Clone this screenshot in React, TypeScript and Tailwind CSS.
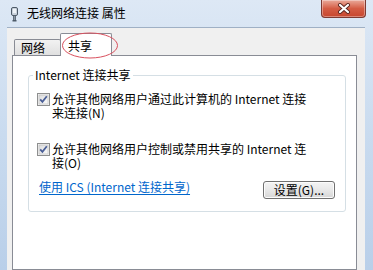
export default function App() {
  return (
    <div className="relative w-[373px] h-[270px] overflow-hidden flex flex-col bg-gradient-to-b from-[#dde8f5] via-[#c9dbef] to-[#b9cfe9] font-['Noto_Sans_CJK_SC',sans-serif] text-[12px] leading-[14px] text-black">
      {/* Title bar */}
      <div className="h-[27px] shrink-0 flex items-start pl-[10px] pr-[7px]">
        <svg width="9" height="15" viewBox="0 0 9 15" className="mt-[7px]">
          <rect x="1.5" y="0.5" width="6" height="8" rx="1.5" fill="#c9d2dc" stroke="#4d5a68" />
          <rect x="3" y="2" width="3" height="4" fill="#eef3f8" />
          <rect x="3.5" y="8.5" width="2" height="5" fill="#8a96a3" stroke="#4d5a68" strokeWidth="0.8" />
          <rect x="2.5" y="13" width="4" height="1.5" fill="#4d5a68" />
        </svg>
        <span className="ml-[8px] mt-[6px] whitespace-nowrap">无线网络连接 属性</span>
        <button className="ml-auto w-[45px] h-[18px] flex items-center justify-center rounded-b-[4px] border border-t-0 border-[#7d3a32] bg-gradient-to-b from-[#e9a99a] via-[#d45c44] to-[#c7462e] shadow-[inset_0_0_0_1px_rgba(255,255,255,0.35)]">
          <svg width="14" height="11" viewBox="0 0 14 11">
            <path d="M3 2 L11 9 M11 2 L3 9" stroke="#5a2620" strokeWidth="4" strokeLinecap="round" />
            <path d="M3 2 L11 9 M11 2 L3 9" stroke="#ffffff" strokeWidth="2.2" strokeLinecap="round" />
          </svg>
        </button>
      </div>

      {/* Window body */}
      <div className="flex-1 flex pl-[7px] pr-[8px]">
        <div className="flex-1 flex flex-col bg-[#f0f0f0] border-t border-[#9fb0c5] pl-[5px] pr-[8px] pt-[5px]">
          {/* Tabs */}
          <div className="h-[22px] flex items-end">
            <div className="ml-[2px] w-[47px] h-[16px] pl-[6px] pt-[1px] border border-b-0 border-[#898c95] rounded-t-[2px] bg-gradient-to-b from-[#f2f2f2] to-[#e0e0e0] whitespace-nowrap">
              网络
            </div>
            <div className="relative z-10 -ml-px -mb-px w-[52px] h-[23px] pl-[7px] pt-[5px] border border-b-0 border-[#898c95] rounded-t-[2px] bg-white whitespace-nowrap">
              共享
            </div>
          </div>

          {/* Tab panel */}
          <div className="flex-1 bg-white border border-[#898c95] pl-[15px] pt-[12px]">
            <fieldset className="w-[318px] border border-[#d5dfe5] rounded-[3px] px-[8px] pt-[10px] pb-[12px]">
              <legend className="-ml-[4px] px-[2px] whitespace-nowrap">Internet 连接共享</legend>

              <div className="flex items-start">
                <Check />
                <span className="ml-[2px] whitespace-nowrap">
                  允许其他网络用户通过此计算机的 Internet 连接
                  <br />
                  来连接(N)
                </span>
              </div>

              <div className="flex items-start mt-[22px]">
                <Check />
                <span className="ml-[2px] whitespace-nowrap">
                  允许其他网络用户控制或禁用共享的 Internet 连
                  <br />
                  接(O)
                </span>
              </div>

              <div className="flex items-start justify-between mt-[10px]">
                <a className="pl-[2px] text-[#0066cc] underline underline-offset-2 whitespace-nowrap cursor-pointer">
                  使用 ICS (Internet 连接共享)
                </a>
                <button className="mt-[1px] mr-[2px] w-[72px] h-[18px] flex items-center justify-center rounded-[3px] border border-[#707070] bg-gradient-to-b from-[#f4f4f4] via-[#e8e8e8] to-[#d6d6d6] shadow-[inset_0_0_0_1px_#fcfcfc] text-[12px] leading-[14px] whitespace-nowrap">
                  设置(G)...
                </button>
              </div>
            </fieldset>
          </div>
        </div>
      </div>

      {/* Red annotation ellipse around the selected tab */}
      <svg className="absolute z-20 left-[61px] top-[32px] pointer-events-none" width="58" height="27" viewBox="0 0 58 27">
        <ellipse cx="29" cy="13.5" rx="27.5" ry="12.5" fill="none" stroke="#d9505e" strokeWidth="1" />
      </svg>
    </div>
  );
}

function Check() {
  return (
    <svg width="13" height="13" viewBox="0 0 13 13" className="mt-[1px] shrink-0">
      <defs>
        <linearGradient id="cbg" x1="0" y1="0" x2="1" y2="1">
          <stop offset="0" stopColor="#dcdcdc" />
          <stop offset="1" stopColor="#fbfbfb" />
        </linearGradient>
      </defs>
      <rect x="0.5" y="0.5" width="12" height="12" fill="#f4f4f4" stroke="#8e8f8f" />
      <rect x="2" y="2" width="9" height="9" fill="url(#cbg)" stroke="#b8b8b8" strokeWidth="0.6" />
      <path d="M3.2 6.4 L5.4 8.8 L9.8 3.2" fill="none" stroke="#4a5f97" strokeWidth="1.8" />
    </svg>
  );
}
